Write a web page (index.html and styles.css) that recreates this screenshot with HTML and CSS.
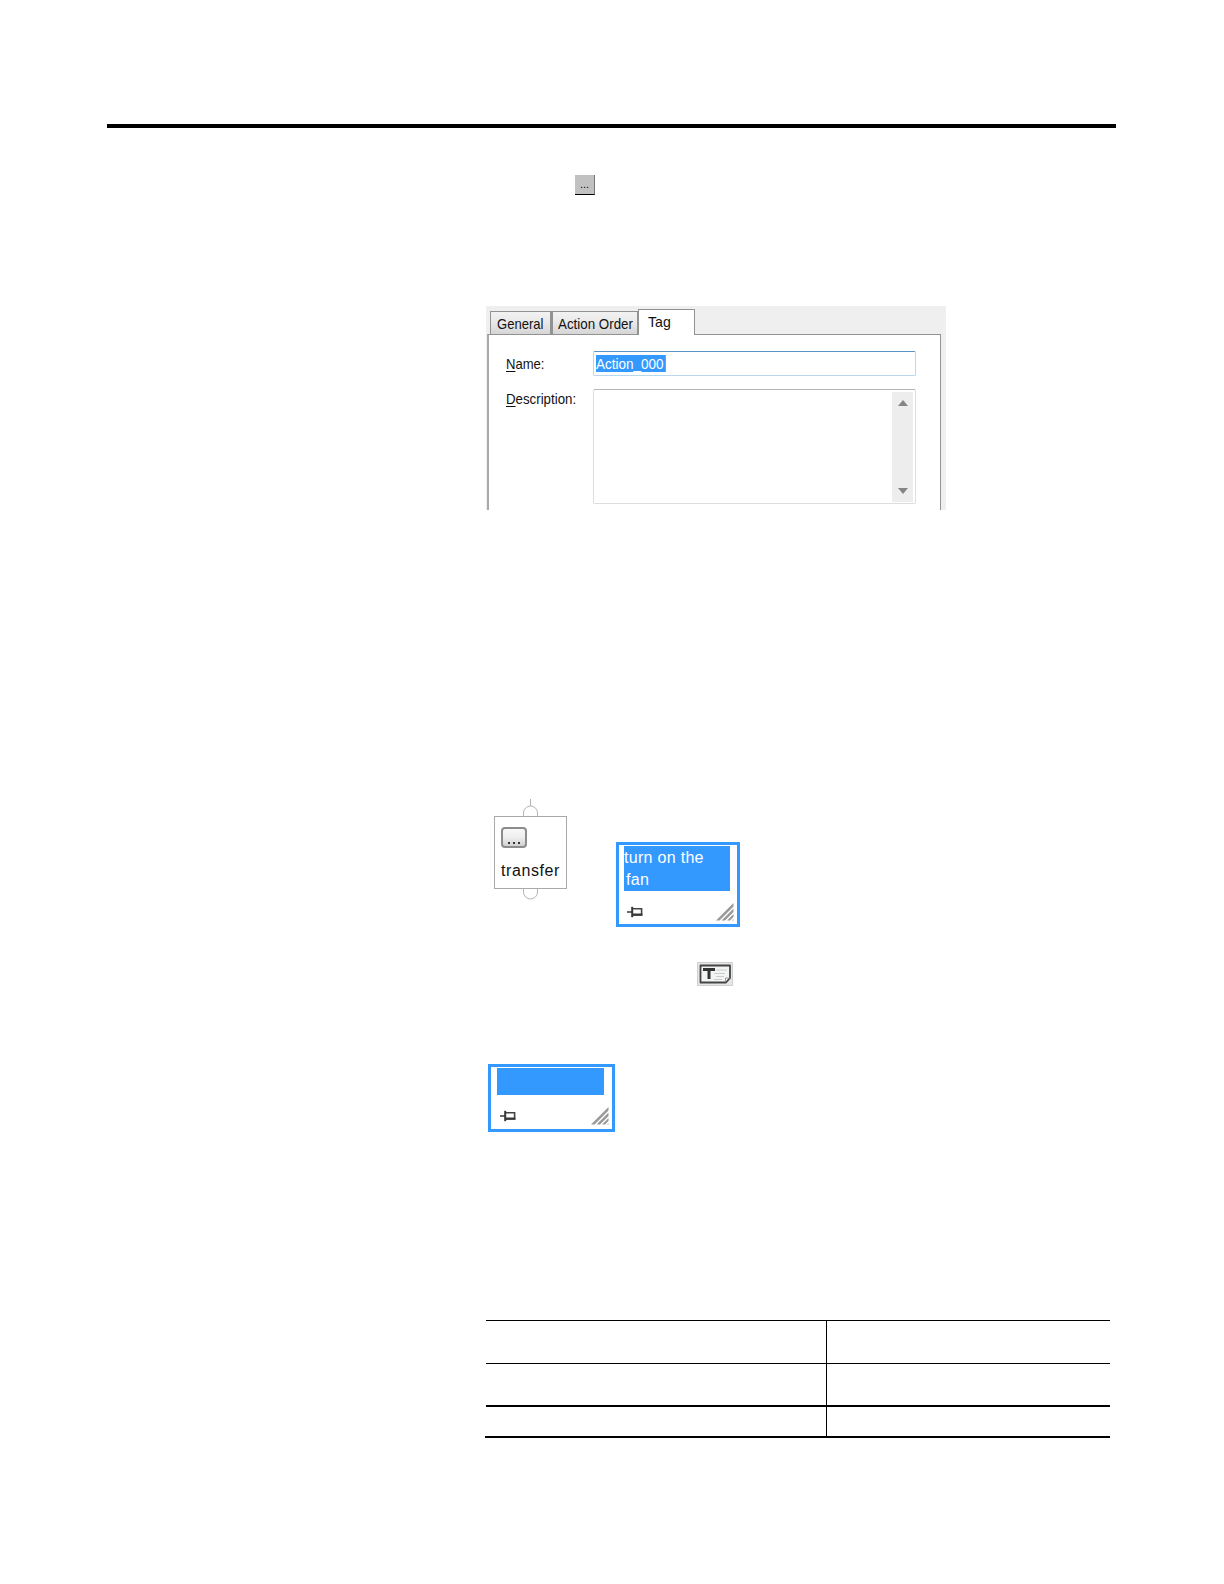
FILE: index.html
```
<!DOCTYPE html>
<html lang="en">
<head>
  <meta charset="UTF-8" />
  <meta name="viewport" content="width=device-width, initial-scale=1.0" />
  <title>Action tag</title>
  <link rel="stylesheet" href="styles.css">
</head>
<body>
  <svg class="defs" width="0" height="0">
    <symbol id="pin" viewBox="0 0 16 12">
      <path d="M0 6H5" stroke="#383838" stroke-width="1.5" />
      <path d="M5.2 .8V11.2" stroke="#383838" stroke-width="2" />
      <path d="M6 2.7H14.6V9H6" stroke="#444" stroke-width="1.6" fill="none" />
      <path d="M6 8.6H15.4" stroke="#383838" stroke-width="2.2" />
    </symbol>
    <symbol id="grip" viewBox="0 0 18 18">
      <path d="M0 17.5L17.5 0V3.5L3.5 17.5ZM5.5 17.5L17.5 5.5V9L9 17.5ZM11 17.5L17.5 11V14L14 17.5ZM16 17.5L17.5 16V17.5Z" fill="#999" />
    </symbol>
  </svg>

  <div class="page">
    <hr class="rule" />
    <button class="browse">...</button>

    <div class="dialog">
      <div class="tabs">
        <div class="tab general"><span>General</span></div>
        <div class="tab order"><span>Action Order</span></div>
        <div class="tab active"><span>Tag</span></div>
      </div>
      <div class="panel">
        <div class="row">
          <div class="label"><span class="name"><u>N</u>ame:</span></div>
          <div class="field"><div class="selected"><span>Action_000</span></div></div>
        </div>
        <div class="row">
          <div class="label"><span class="description"><u>D</u>escription:</span></div>
          <div class="textarea">
            <div class="scrollbar">
              <svg width="10" height="6"><path d="M5 0L10 6H0Z" fill="#858585" /></svg>
              <svg width="10" height="6"><path d="M0 0H10L5 6Z" fill="#858585" /></svg>
            </div>
          </div>
        </div>
      </div>
    </div>

    <div class="chart">
      <div class="action">
        <svg width="17" height="17"><path d="M8.5 0V7M1.5 17V14A7 7 0 0 1 15.5 14V17" fill="none" stroke="#b4b4b4" /></svg>
        <div class="action-box">
          <div class="more"><i></i><i></i><i></i></div>
          <span>transfer</span>
        </div>
        <svg width="17" height="11"><path d="M1.5 0V3A7 7 0 0 0 15.5 3V0" fill="none" stroke="#b4b4b4" /></svg>
      </div>
      <div class="note">
        <div class="note-text"><span>turn on the</span><span>fan</span></div>
        <div class="note-bar">
          <svg class="pin"><use href="#pin" /></svg>
          <svg class="grip"><use href="#grip" /></svg>
        </div>
      </div>
    </div>

    <svg class="text-tool" width="36" height="24" viewBox="0 0 36 24">
      <path d="M.5 .5H35.5V23.5H.5Z" fill="#e6e6e6" stroke="#cfcfcf" />
      <path d="M3.5 3.5H33V16L29 20.5H3.5Z" fill="#f3f5f5" stroke="#444" stroke-width="1.8" stroke-linejoin="round" />
      <path d="M28.5 20V16H32.5" fill="none" stroke="#999" />
      <path d="M6 7.5H18M12 7.5V17" stroke="#333" stroke-width="3" />
      <path d="M19 8H30M17 11.5H28M19 14.5H27M17 17.5H25" stroke="#ccc" />
    </svg>

    <div class="note empty">
      <div class="note-text"></div>
      <div class="note-bar">
        <svg class="pin"><use href="#pin" /></svg>
        <svg class="grip"><use href="#grip" /></svg>
      </div>
    </div>

    <div class="grid">
      <div></div><div></div>
      <div></div><div></div>
      <div></div><div></div>
    </div>
  </div>
</body>
</html>
```
FILE: styles.css
```
* { box-sizing: border-box; }
body { margin: 0; background: #fff; color: #111; font-family: "Liberation Sans", Arial, sans-serif; }
svg { display: block; flex: none; }
.defs { position: absolute; }
.page { width: 1224px; height: 1584px; padding: 124px 108px 0 107px; display: flex; flex-direction: column; align-items: flex-start; }
.rule { width: 1009px; height: 4px; margin: 0; border: 0; background: #000; flex: none; }
.browse { width: 20px; height: 20px; margin: 47px 0 0 468px; padding: 0; border: 0; border-right: 1px solid #777; border-bottom: 1px solid #000; background: #c1c1c1; color: #000; font: 11px/17px "Liberation Sans", Arial, sans-serif; text-align: center; }

/* tag properties */
.dialog { width: 460px; height: 204px; margin: 111px 0 0 379px; padding: 3px 5px 0 1px; background: #efefef; font-size: 15px; }
.dialog span { display: inline-block; transform-origin: 0 50%; white-space: nowrap; }
.tabs { display: flex; align-items: flex-end; height: 25px; padding-left: 3px; }
.tab { height: 23px; border: 1px solid #929292; border-bottom: 0; background: linear-gradient(#f2f2f2, #e8e8e8 50%, #d5d5d5); line-height: 23px; padding-left: 6px; }
.general { width: 61px; }
.general span { transform: scaleX(.87); }
.order { width: 87px; padding-left: 5px; border-left-width: 2px; }
.order span { transform: scaleX(.89); }
.active { width: 57px; height: 26px; margin-bottom: -1px; padding-left: 9px; background: #fff; position: relative; line-height: 23px; }
.active span { transform: scaleX(.94); }
.panel { height: 176px; padding: 16px 0 0 17px; background: #fff; border: 1px solid #929292; border-left: 2px solid #aaa; border-bottom: 0; }
.row { display: flex; margin-bottom: 13px; }
.label { width: 87px; line-height: 20px; padding-top: 3px; }
.row + .row .label { padding-top: 0; }
.row + .row .textarea { height: 115px; }
.label u { text-decoration-thickness: 1px; text-underline-offset: 2px; }
.name { transform: scaleX(.87); }
.description { transform: scaleX(.885); }
.field { width: 323px; height: 25px; padding: 3px 0 0 2px; border: 1px solid #b9d7ed; border-top: 1px solid #5b94c6; border-radius: 2px; }
.selected { width: 70px; height: 17px; background: #3399ff; color: #fff; line-height: 17px; border-right: 1px solid #d98745; }
.selected span { transform: scaleX(.9); }
.textarea { width: 323px; padding: 2px 2px 1px; border: 1px solid #ddd; border-top-color: #b5b5b5; border-radius: 2px; display: flex; justify-content: flex-end; }
.scrollbar { width: 21px; padding: 8px 0; display: flex; flex-direction: column; align-items: center; justify-content: space-between; background: #ededed; }

/* chart elements */
.chart { display: flex; align-items: flex-start; margin: 289px 0 0 387px; }
.action { width: 73px; display: flex; flex-direction: column; align-items: center; }
.action-box { width: 73px; height: 73px; padding: 10px 0 0 6px; border: 1px solid #aaa; font-size: 16px; line-height: 20px; letter-spacing: .6px; }
.action-box span { display: block; margin-top: 13px; }
.more { width: 26px; height: 21px; border: 2px solid #8c8c8c; border-radius: 4px; background: linear-gradient(#f8f8f8, #eee 50%, #d0d0d0); display: flex; align-items: flex-end; justify-content: center; gap: 3px; padding-bottom: 2px; }
.more i { width: 2px; height: 2px; background: #333; }
.note { width: 124px; height: 85px; margin: 43px 0 0 49px; padding: 1px 5px 0; border: 3px solid #3399ff; background: #fff; }
.note-text { width: 106px; height: 45px; padding-top: 1px; background: #3399ff; color: #fff; font-size: 16px; line-height: 22px; letter-spacing: .3px; }
.note-text span { display: block; }
.note-text span + span { padding-left: 2px; }
.note-bar { display: flex; justify-content: space-between; padding: 12px 0 0 3px; margin-right: -2px; }
.pin { width: 16px; height: 12px; margin-top: 3px; }
.grip { width: 18px; height: 18px; }
.text-tool { margin: 35px 0 0 590px; }
.empty { width: 127px; height: 68px; margin: 78px 0 0 381px; padding-left: 6px; }
.empty .note-text { width: 107px; height: 27px; }

/* blank table */
.grid { width: 625px; height: 118px; margin: 188px 0 0 378px; border-bottom: 2px solid #000; padding-left: 1px; display: grid; grid-template-columns: 340px 284px; grid-template-rows: 43px 42px 31px; }
.grid div { border-top: 1px solid #000; }
.grid div:nth-child(even) { border-left: 1px solid #000; }
.grid div:nth-child(n+5) { border-top-width: 2px; }
```
